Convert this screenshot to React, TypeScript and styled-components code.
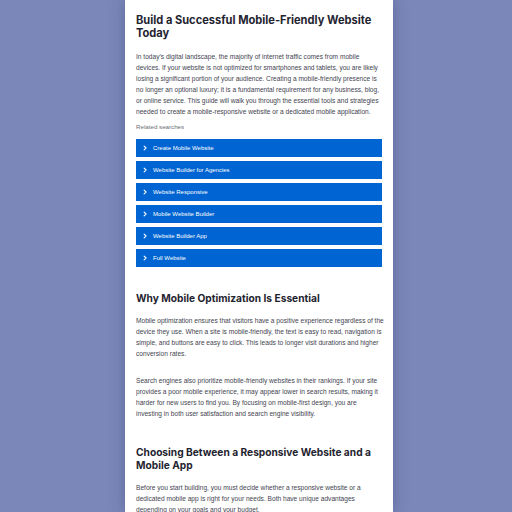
import React from 'react';
import styled, { createGlobalStyle } from 'styled-components';

const GlobalStyle = createGlobalStyle`
  html, body {
    margin: 0;
    padding: 0;
    background: #7b87b8;
  }
  body {
    font-family: "Liberation Sans", Arial, sans-serif;
  }
`;

const Page = styled.div`
  height: 512px;
  overflow: hidden;
  display: flex;
  justify-content: center;
`;

const Card = styled.article`
  width: 268px;
  box-sizing: border-box;
  margin-left: 6px;
  padding: 13.5px 11px 0;
  background: #ffffff;
  box-shadow: 0 0 14px rgba(40, 50, 100, 0.35);
`;

const Title = styled.h1<{ $size?: number; $top?: number }>`
  margin: ${(p) => p.$top ?? 0}px 0 0;
  font-family: Inter, "Liberation Sans", sans-serif;
  font-weight: 700;
  font-size: ${(p) => p.$size ?? 10.2}px;
  line-height: 13px;
  color: #1f2430;
`;

const Text = styled.p<{ $top?: number }>`
  margin: ${(p) => p.$top ?? 0}px -2px 0 0;
  font-family: "Liberation Sans", Arial, sans-serif;
  font-size: 6.6px;
  line-height: 11px;
  color: #3f4450;
`;

const Label = styled.div`
  margin-top: 5.5px;
  font-family: "Liberation Sans", Arial, sans-serif;
  font-size: 6.2px;
  line-height: 10px;
  color: #6b6f78;
`;

const List = styled.div`
  margin-top: 7px;
  display: flex;
  flex-direction: column;
  gap: 4px;
`;

const Item = styled.a`
  height: 18px;
  display: flex;
  align-items: center;
  gap: 5px;
  padding-left: 6px;
  background: #0064d2;
  color: #ffffff;
  font-family: "Liberation Sans", Arial, sans-serif;
  font-size: 6px;
  text-decoration: none;
`;

const Chevron = () => (
  <svg width="6" height="6" viewBox="0 0 10 10" fill="none">
    <path d="M3.5 1.8 L6.8 5 L3.5 8.2" stroke="#fff" strokeWidth="1.8" strokeLinecap="round" strokeLinejoin="round" />
  </svg>
);

const searches = [
  'Create Mobile Website',
  'Website Builder for Agencies',
  'Website Responsive',
  'Mobile Website Builder',
  'Website Builder App',
  'Full Website',
];

export default function App() {
  return (
    <>
      <GlobalStyle />
      <Page>
        <Card>
          <Title $size={11.1}>Build a Successful Mobile-Friendly Website Today</Title>
          <Text $top={11}>
            In today’s digital landscape, the majority of internet traffic comes from mobile devices. If your
            website is not optimized for smartphones and tablets, you are likely losing a significant portion of
            your audience. Creating a mobile-friendly presence is no longer an optional luxury; it is a fundamental
            requirement for any business, blog, or online service. This guide will walk you through the essential
            tools and strategies needed to create a mobile-responsive website or a dedicated mobile application.
          </Text>
          <Label>Related searches</Label>
          <List>
            {searches.map((s) => (
              <Item key={s} href="#">
                <Chevron />
                {s}
              </Item>
            ))}
          </List>
          <Title $top={24.5}>Why Mobile Optimization Is Essential</Title>
          <Text $top={10}>
            Mobile optimization ensures that visitors have a positive experience regardless of the device they
            use. When a site is mobile-friendly, the text is easy to read, navigation is simple, and buttons are
            easy to click. This leads to longer visit durations and higher conversion rates.
          </Text>
          <Text $top={16}>
            Search engines also prioritize mobile-friendly websites in their rankings. If your site provides a poor
            mobile experience, it may appear lower in search results, making it harder for new users to find you.
            By focusing on mobile-first design, you are investing in both user satisfaction and search engine
            visibility.
          </Text>
          <Title $top={27}>Choosing Between a Responsive Website and a Mobile App</Title>
          <Text $top={10}>
            Before you start building, you must decide whether a responsive website or a dedicated mobile app is
            right for your needs. Both have unique advantages depending on your goals and your budget.
          </Text>
        </Card>
      </Page>
    </>
  );
}
